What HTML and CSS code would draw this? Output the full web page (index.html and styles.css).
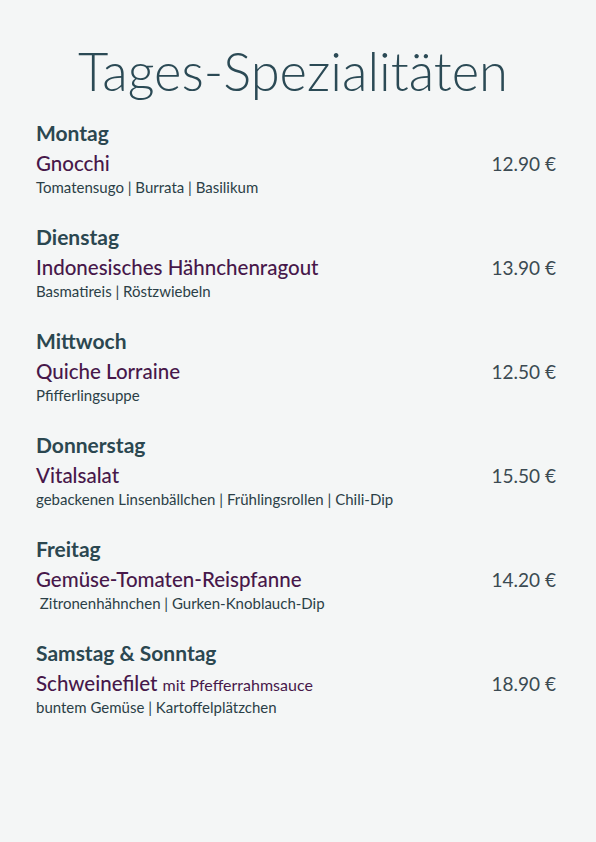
FILE: index.html
```html
<!DOCTYPE html>
<html lang="de">
<head>
    <meta charset="UTF-8">
    <meta name="viewport" content="width=device-width, initial-scale=1.0">
    <title>Tages-Spezialitäten</title>
    <link rel="stylesheet" href="styles.css">
</head>
<body>
    <div class="page">
        <h1>Tages-Spezialitäten</h1>

        <!-- one block per day: day, dish + price, sides -->
        <div class="day">
            <h2>Montag</h2>
            <div class="dish-row">
                <span class="dish">Gnocchi</span>
                <span class="price">12.90 €</span>
            </div>
            <p class="sides">Tomatensugo | Burrata | Basilikum</p>
        </div>

        <div class="day">
            <h2>Dienstag</h2>
            <div class="dish-row">
                <span class="dish">Indonesisches Hähnchenragout</span>
                <span class="price">13.90 €</span>
            </div>
            <p class="sides">Basmatireis | Röstzwiebeln</p>
        </div>

        <div class="day">
            <h2>Mittwoch</h2>
            <div class="dish-row">
                <span class="dish">Quiche Lorraine</span>
                <span class="price">12.50 €</span>
            </div>
            <p class="sides">Pfifferlingsuppe</p>
        </div>

        <div class="day">
            <h2>Donnerstag</h2>
            <div class="dish-row">
                <span class="dish">Vitalsalat</span>
                <span class="price">15.50 €</span>
            </div>
            <p class="sides">gebackenen Linsenbällchen | Frühlingsrollen | Chili-Dip</p>
        </div>

        <div class="day">
            <h2>Freitag</h2>
            <div class="dish-row">
                <span class="dish">Gemüse-Tomaten-Reispfanne</span>
                <span class="price">14.20 €</span>
            </div>
            <p class="sides">&nbsp;Zitronenhähnchen | Gurken-Knoblauch-Dip</p>
        </div>

        <div class="day">
            <h2>Samstag &amp; Sonntag</h2>
            <div class="dish-row">
                <span class="dish">Schweinefilet <small>mit Pfefferrahmsauce</small></span>
                <span class="price">18.90 €</span>
            </div>
            <p class="sides">buntem Gemüse | Kartoffelplätzchen</p>
        </div>
    </div>
</body>
</html>
```

FILE: styles.css
```css
body {
    margin: 0;
    padding: 0;
    background-color: #f4f6f6;
    font-family: Lato, "Open Sans", sans-serif;
    color: #2b4750;
}
.page {
    padding: 0 40px 0 36px;
}
h1 {
    margin: 0;
    padding: 39px 6px 15px 0;
    text-align: center;
    font-size: 52.5px;
    line-height: 64px;
    font-weight: 300;
    color: #2b4a55;
}
.day {
    height: 104px;
}
h2 {
    margin: 0;
    height: 30px;
    font-size: 21px;
    line-height: 30px;
    font-weight: 700;
    color: #2b4750;
}
.dish-row {
    display: flex;
    justify-content: space-between;
    align-items: baseline;
    height: 24px;
    padding-top: 3px;
    line-height: 24px;
}
.dish {
    font-size: 20.5px;
    font-weight: 500;
    color: #47184a;
}
.dish small {
    font-size: 16px;
    font-weight: 400;
}
.price {
    font-size: 19px;
    font-weight: 400;
    color: #3b4a52;
}
.sides {
    margin: 0;
    height: 24px;
    font-size: 15px;
    line-height: 24px;
    color: #2b3f47;
}
```
